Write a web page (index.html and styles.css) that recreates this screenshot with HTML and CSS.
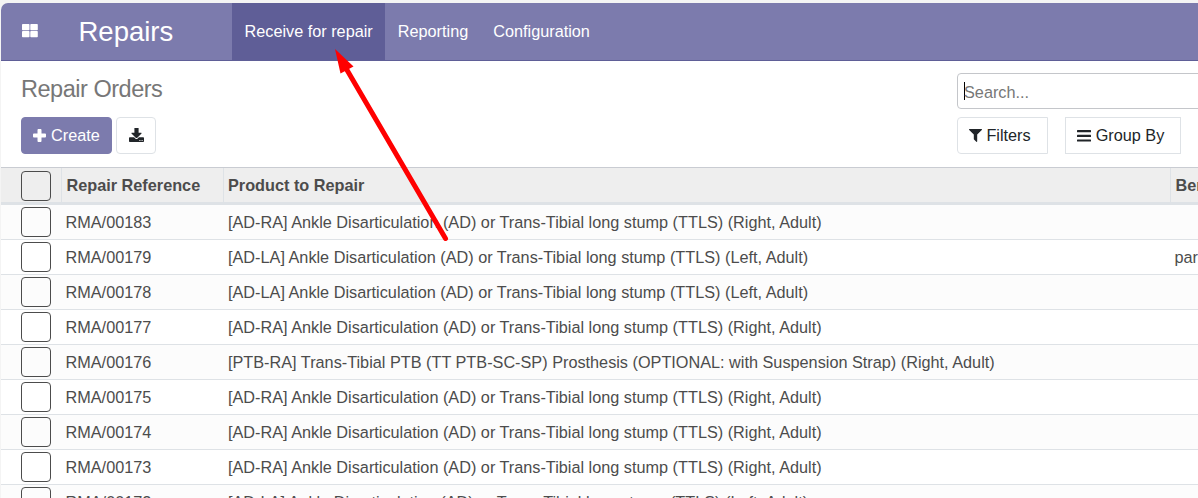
FILE: index.html
```html
<!DOCTYPE html>
<html lang="en">
<head>
<meta charset="utf-8">
<title>Repair Orders</title>
<link rel="stylesheet" href="styles.css">
</head>
<body>
<div class="app">
  <header class="navbar">
    <a class="apps"><svg width="16" height="14" viewBox="0 0 16 14" fill="#fff"><rect width="7.5" height="6.2" rx=".8"/><rect x="8.3" width="7.5" height="6.2" rx=".8"/><rect y="7" width="7.5" height="6.2" rx=".8"/><rect x="8.3" y="7" width="7.5" height="6.2" rx=".8"/></svg></a>
    <a class="brand">Repairs</a>
    <nav class="menu">
      <a class="menu-item active">Receive for repair</a>
      <a class="menu-item">Reporting</a>
      <a class="menu-item">Configuration</a>
    </nav>
  </header>
  <section class="panel">
    <div class="panel-left">
      <h1 class="title">Repair Orders</h1>
      <div class="actions">
        <button class="btn primary"><svg width="13" height="13" viewBox="0 0 13 13" fill="#fff"><path d="M5.4 0h2.2q.9 0 .9.900v3.600h3.600q.9 0 .9.900v2.200q0 .9-.9.900H8.500v3.600q0 .9-.9.900H5.400q-.9 0-.9-.9V8.500H.9q-.9 0-.9-.9V5.400q0-.9.900-.9h3.600V.9q0-.9.900-.9z"/></svg><span>Create</span></button>
        <button class="btn export"><svg width="15" height="14" viewBox="0 0 15 14" fill="#212529"><path d="M5.400 0h4.200v4.800h2.600q.7 0 .3.600L8 9.900q-.5.400-1 0L2.500 5.400q-.4-.6.300-.6h2.600z"/><path fill-rule="evenodd" d="M.8 9.300h4.300l1.200 1.200q1.200 1 2.400 0l1.200-1.200h4.300q.8 0 .8.800v3.100q0 .8-.8.800H.8q-.8 0-.8-.8v-3.100q0-.8.800-.8zM10.400 12v1h1v-1zm2.200 0v1h1v-1z"/></svg></button>
      </div>
    </div>
    <div class="panel-right">
      <div class="search"><i class="caret"></i><span>Search...</span></div>
      <div class="filters">
        <button class="btn filter"><svg width="13" height="13" viewBox="0 0 13 13" fill="#212529"><path d="M.6 0h11.800q1 .1.400 1L8.200 5.600v6.700q-.1.900-.9.500L5 10.600q-.2-.2-.2-.5V5.600L.2 1Q-.4.100.6 0z"/></svg><span>Filters</span></button>
        <button class="btn group"><svg width="14" height="12" viewBox="0 0 14 12" fill="#212529"><rect width="14" height="2.200" rx=".5"/><rect y="4.700" width="14" height="2.200" rx=".5"/><rect y="9.400" width="14" height="2.200" rx=".5"/></svg><span>Group By</span></button>
      </div>
    </div>
  </section>
  <main class="list">
    <div class="row head"><div class="cell check"><i class="box"></i></div><div class="cell ref">Repair Reference</div><div class="cell product">Product to Repair</div><div class="cell partner">Beneficiary</div></div>
    <div class="row"><div class="cell check"><i class="box"></i></div><div class="cell ref">RMA/00183</div><div class="cell product">[AD-RA] Ankle Disarticulation (AD) or Trans-Tibial long stump (TTLS) (Right, Adult)</div><div class="cell partner"></div></div>
    <div class="row"><div class="cell check"><i class="box"></i></div><div class="cell ref">RMA/00179</div><div class="cell product">[AD-LA] Ankle Disarticulation (AD) or Trans-Tibial long stump (TTLS) (Left, Adult)</div><div class="cell partner">par</div></div>
    <div class="row"><div class="cell check"><i class="box"></i></div><div class="cell ref">RMA/00178</div><div class="cell product">[AD-LA] Ankle Disarticulation (AD) or Trans-Tibial long stump (TTLS) (Left, Adult)</div><div class="cell partner"></div></div>
    <div class="row"><div class="cell check"><i class="box"></i></div><div class="cell ref">RMA/00177</div><div class="cell product">[AD-RA] Ankle Disarticulation (AD) or Trans-Tibial long stump (TTLS) (Right, Adult)</div><div class="cell partner"></div></div>
    <div class="row"><div class="cell check"><i class="box"></i></div><div class="cell ref">RMA/00176</div><div class="cell product">[PTB-RA] Trans-Tibial PTB (TT PTB-SC-SP) Prosthesis (OPTIONAL: with Suspension Strap) (Right, Adult)</div><div class="cell partner"></div></div>
    <div class="row"><div class="cell check"><i class="box"></i></div><div class="cell ref">RMA/00175</div><div class="cell product">[AD-RA] Ankle Disarticulation (AD) or Trans-Tibial long stump (TTLS) (Right, Adult)</div><div class="cell partner"></div></div>
    <div class="row"><div class="cell check"><i class="box"></i></div><div class="cell ref">RMA/00174</div><div class="cell product">[AD-RA] Ankle Disarticulation (AD) or Trans-Tibial long stump (TTLS) (Right, Adult)</div><div class="cell partner"></div></div>
    <div class="row"><div class="cell check"><i class="box"></i></div><div class="cell ref">RMA/00173</div><div class="cell product">[AD-RA] Ankle Disarticulation (AD) or Trans-Tibial long stump (TTLS) (Right, Adult)</div><div class="cell partner"></div></div>
    <div class="row"><div class="cell check"><i class="box"></i></div><div class="cell ref">RMA/00172</div><div class="cell product">[AD-LA] Ankle Disarticulation (AD) or Trans-Tibial long stump (TTLS) (Left, Adult)</div><div class="cell partner"></div></div>
  </main>
</div>
<svg class="arrow" width="130" height="200" viewBox="330 45 130 200"><path d="M347 70L445.500 238.500" stroke="#f00" stroke-width="5" stroke-linecap="round"/><path d="M335 49L353.500 66.500L340.500 73.500z" fill="#f00"/></svg>
</body>
</html>
```
FILE: styles.css
```css
* { box-sizing: border-box; }
body {
  margin: 0;
  width: 1198px;
  height: 498px;
  overflow: hidden;
  padding: 3px 0 0 1px;
  background: #f4f4f4;
  font: 16.25px/24px "Liberation Sans", Arial, sans-serif;
  color: #4c4c4c;
}
.app {
  height: 495px;
  overflow: hidden;
  background: #fff;
  border-top-left-radius: 7px;
}
.navbar {
  display: flex;
  height: 58px;
  background: #7c7bad;
  border-bottom: 1px solid #5f5e97;
  color: #fff;
}
.apps { width: 77.500px; padding: 21px 0 0 21px; line-height: 0; }
.brand { width: 153.500px; font-size: 27.500px; line-height: 57px; }
.menu { display: flex; }
.menu-item { padding: 0 12.500px; line-height: 57px; white-space: nowrap; }
.menu-item.active { background: #5f5e97; }
.panel {
  display: flex;
  justify-content: space-between;
  height: 107px;
  border-bottom: 1px solid #c9ccd2;
}
.panel-left { padding: 14px 0 0 20px; }
.title {
  margin: 0;
  font-size: 23.500px;
  letter-spacing: -.48px;
  font-weight: 400;
  line-height: 28px;
  color: #777;
}
.actions { display: flex; gap: 4px; margin-top: 14px; }
.btn {
  display: flex;
  align-items: center;
  justify-content: center;
  height: 37px;
  padding: 0;
  border: 1px solid #dee2e6;
  border-radius: 4px;
  background: #fff;
  color: #212529;
  font: inherit;
}
.btn span { padding-bottom: 2px; }
.primary { width: 91px; gap: 5px; background: #7c7bad; border-color: #7c7bad; color: #fff; }
.primary svg { margin-top: -1px; }
.export { width: 40px; }
.export svg { margin-top: -2px; }
.panel-right { width: 241px; padding-top: 12px; }
.search {
  display: flex;
  align-items: center;
  width: 250px;
  height: 36px;
  padding-left: 6px;
  border: 1px solid #c4c6ca;
  border-radius: 4px;
  color: #777;
}
.caret { width: 1px; height: 18px; margin-right: -1px; background: #000; }
.search span { padding-top: 2px; }
.filters { display: flex; gap: 17px; margin-top: 8px; }
.filter { width: 91px; gap: 4px; padding-right: 5px; border-radius: 4px 0 0 4px; }
.group { width: 116px; gap: 5px; padding-right: 5px; border-radius: 0; }
.row {
  display: grid;
  grid-template-columns: 60px 162px 947px 1fr;
  height: 35px;
  border-bottom: 1px solid #dee2e6;
}
.row:nth-child(even) { background: #fcfcfc; }
.cell { padding: 5px 0 0 4.500px; white-space: nowrap; overflow: hidden; }
.cell.check { padding: 2px 0 0 20px; }
.box {
  display: block;
  width: 30px;
  height: 30px;
  border: 1px solid #4c4c4c;
  border-radius: 4px;
}
.row .product { padding-left: 5px; }
.head {
  height: 37px;
  border-bottom: 3px solid #dee2e6;
  background: #eee;
  font-weight: 700;
}
.head .check { padding-top: 3px; }
.head .cell + .cell { border-left: 1px solid #dee2e6; }
.head .product { padding-left: 4px; }
.arrow { position: absolute; left: 330px; top: 45px; }
```
